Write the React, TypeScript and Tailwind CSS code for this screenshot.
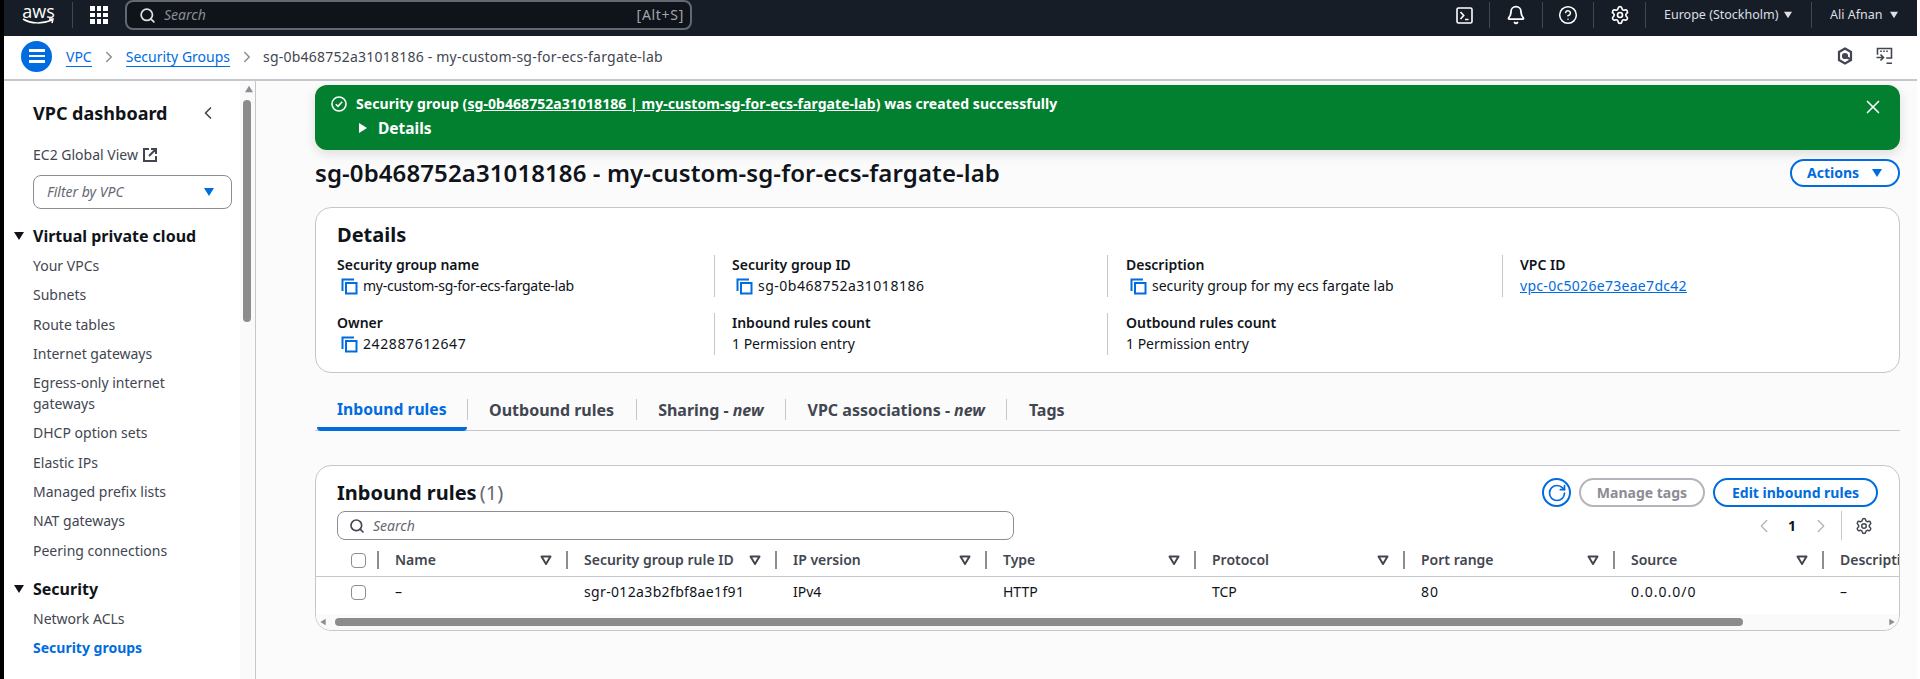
import { Bell, ChevronLeft, ChevronRight, CircleHelp, RotateCw, Search, Settings, X } from "lucide-react";

const FONT = "font-['Noto_Sans',sans-serif]";

const VPC_LINKS = [
  "Your VPCs",
  "Subnets",
  "Route tables",
  "Internet gateways",
  "Egress-only internet gateways",
  "DHCP option sets",
  "Elastic IPs",
  "Managed prefix lists",
  "NAT gateways",
  "Peering connections",
];

const COLUMNS = [
  { label: "Name", value: "–", tracking: "" },
  { label: "Security group rule ID", value: "sgr-012a3b2fbf8ae1f91", tracking: "tracking-[0.35px]" },
  { label: "IP version", value: "IPv4", tracking: "" },
  { label: "Type", value: "HTTP", tracking: "" },
  { label: "Protocol", value: "TCP", tracking: "" },
  { label: "Port range", value: "80", tracking: "tracking-[1px]" },
  { label: "Source", value: "0.0.0.0/0", tracking: "tracking-[1px]" },
  { label: "Description", value: "–", tracking: "" },
];

const TABLE_GRID =
  "grid grid-cols-[61px_189px_209px_210px_209px_209px_210px_209px_200px]";

function Caret({ className = "" }: { className?: string }) {
  return (
    <svg viewBox="0 0 12 10" className={className} fill="currentColor">
      <path d="M1 1h10L6 9z" />
    </svg>
  );
}

function CopyIcon() {
  return (
    <svg viewBox="0 0 17 17" className="size-[17px] shrink-0 text-[#006ce0]" fill="none" stroke="currentColor" strokeWidth="2">
      <path d="M1.5 13V1.5H13" />
      <rect x="5" y="5" width="10.5" height="10.5" />
    </svg>
  );
}

function FilterIcon() {
  return (
    <svg viewBox="0 0 12 12" className="size-3 text-[#424650]" fill="none" stroke="currentColor" strokeWidth="2" strokeLinejoin="round">
      <path d="M1.5 2.5h9L6 10z" />
    </svg>
  );
}

function TopBar() {
  return (
    <header className="flex h-9 shrink-0 bg-[#161d26] text-white">
      <div className="flex h-[30px] items-center">
        <div className="ml-[18px] -mt-[2px] flex w-[33px] flex-col items-center">
          <span className="font-['Open_Sans',sans-serif] text-[18px] leading-[16px]">aws</span>
          <svg viewBox="0 0 33 7" className="-mt-px h-[7px] w-[33px]" fill="none" stroke="currentColor" strokeWidth="1.5">
            <path d="M1 1c8 5 20 5 29 1M27 1h4l-1 4" />
          </svg>
        </div>
        <div className="ml-[17px] h-[26px] w-px bg-[#424650]" />
        <div className="ml-[17px] grid w-[18px] grid-cols-3 gap-[2px]">
          {Array.from({ length: 9 }).map((_, i) => (
            <span key={i} className="size-[4.5px] bg-white" />
          ))}
        </div>
        <div className="ml-[17px] flex h-[30px] w-[567px] items-center rounded-lg border-2 border-[#656871] bg-[#0f141a] pl-3 pr-[6px]">
          <Search className="size-[17px] text-[#dedee3]" strokeWidth={2.5} />
          <span className="ml-[8px] text-sm italic text-[#8c8c94]">Search</span>
          <span className="ml-auto text-sm tracking-[0.7px] text-[#a4a4ad]">[Alt+S]</span>
        </div>
      </div>
      <div className="ml-auto flex h-[30px] items-center">
        <div className="flex w-[50px] justify-center">
          <svg viewBox="0 0 17 17" className="size-[17px]" fill="none" stroke="currentColor" strokeWidth="1.6">
            <rect x="1" y="1" width="15" height="15" rx="1.5" />
            <path d="M4.5 5l3.2 3.500-3.200 3.500M9 12.500h3.500" />
          </svg>
        </div>
        <div className="flex h-[26px] w-[53px] items-center justify-center border-l border-[#424650]">
          <Bell className="size-5" strokeWidth={2.2} />
        </div>
        <div className="flex h-[26px] w-[51px] items-center justify-center border-l border-[#424650]">
          <CircleHelp className="size-5" strokeWidth={1.8} />
        </div>
        <div className="flex h-[26px] w-[52px] items-center justify-center border-l border-[#424650]">
          <Settings className="size-5" strokeWidth={2} />
        </div>
        <div className="flex h-[26px] w-[166px] items-center border-l border-[#424650] pl-[18px] text-[12.5px] text-[#dedee3]">
          Europe (Stockholm)
          <Caret className="ml-[5px] h-2 w-2.5 text-[#dedee3]" />
        </div>
        <div className="flex h-[26px] w-[106px] items-center border-l border-[#424650] pl-[18px] text-[12.5px] text-[#dedee3]">
          Ali Afnan
          <Caret className="ml-[7px] h-2 w-2.5 text-[#dedee3]" />
        </div>
      </div>
    </header>
  );
}

function Breadcrumbs() {
  return (
    <div className="flex h-[45px] shrink-0 items-center border-b-2 border-[#c6c6cd] bg-white pb-[1px] text-sm">
      <div className="ml-[17px] -mt-[2px] flex size-[31px] flex-col items-center justify-center gap-[3px] rounded-full bg-[#006ce0]">
        <span className="h-[2.5px] w-4 bg-white" />
        <span className="h-[2.5px] w-4 bg-white" />
        <span className="h-[2.5px] w-4 bg-white" />
      </div>
      <a className="ml-[14px] border-b border-[#006ce0] leading-[19px] text-[#006ce0]">VPC</a>
      <ChevronRight className="mx-2 size-[18px] text-[#8c8c94]" strokeWidth={2} />
      <a className="border-b border-[#006ce0] leading-[19px] text-[#006ce0]">Security Groups</a>
      <ChevronRight className="mx-2 size-[18px] text-[#8c8c94]" strokeWidth={2} />
      <span className="-ml-px tracking-[0.22px] text-[#424650]">sg-0b468752a31018186 - my-custom-sg-for-ecs-fargate-lab</span>
      <div className="ml-auto -mt-[2px] flex items-center gap-[21px] pr-[24px] text-[#424650]">
        <svg viewBox="0 0 18 18" className="size-[18px]" fill="none" stroke="currentColor" strokeWidth="2.2">
          <path d="M9 1.500l6 3.500v8l-6 3.500L3 13V5z" />
          <circle cx="9" cy="9" r="2" fill="currentColor" />
          <path d="M10 10l4 2" />
        </svg>
        <svg viewBox="0 0 18 18" className="size-[18px]" fill="none" stroke="currentColor" strokeWidth="1.6">
          <path d="M2.500 7V1.500h14V11H12M6 4.200h.01M9 4.200h.01M12 4.200h.01" strokeLinecap="square" />
          <path d="M1.500 10.500H8M5.500 7.500l3 3-3 3M11.500 16.200h5.500" />
        </svg>
      </div>
    </div>
  );
}

function Sidebar() {
  return (
    <aside className="relative w-[252px] shrink-0 border-r border-[#c6c6cd] bg-white">
      <div className="absolute bottom-0 right-0 top-0 w-[15px] bg-[#fafafa]">
        <Caret className="absolute left-[4px] top-[4px] h-2 w-2.5 rotate-180 text-[#8c8c94]" />
        <div className="absolute left-[3px] top-[19px] h-[222px] w-2 rounded bg-[#8c8c8c]" />
      </div>
      <div className="flex items-center pl-[29px] pt-[19px]">
        <h2 className="text-lg font-bold leading-[26px] text-[#0f141a]">VPC dashboard</h2>
        <ChevronLeft className="ml-[31px] size-5 text-[#424650]" strokeWidth={2} />
      </div>
      <div className="mt-[19px] flex items-center pl-[29px] text-sm leading-5 text-[#424650]">
        EC2 Global View
        <svg viewBox="0 0 16 16" className="ml-1 size-4" fill="none" stroke="currentColor" strokeWidth="2">
          <path d="M7 2H2v12h12V9M9 2h5v5M14 2L7 9" />
        </svg>
      </div>
      <div className="ml-[29px] mt-[10px] flex h-[34px] w-[199px] items-center rounded-lg border border-[#8c8c94] pl-[13px] pr-[16px] text-sm italic text-[#656871]">
        Filter by VPC
        <Caret className="ml-auto h-2.5 w-3 text-[#006ce0]" />
      </div>
      <NavSection title="Virtual private cloud" links={VPC_LINKS} className="mt-[16px]" />
      <NavSection title="Security" links={["Network ACLs"]} active="Security groups" className="mt-[17px]" />
    </aside>
  );
}

function NavSection({ title, links, active, className = "" }: { title: string; links: string[]; active?: string; className?: string }) {
  return (
    <div className={className}>
      <div className="flex items-center pl-[9px] text-base font-bold leading-[22px] text-[#0f141a]">
        <Caret className="mr-[8px] h-3 w-3" />
        {title}
      </div>
      <ul className="pl-[29px] pt-[8px] text-sm leading-[21px] text-[#424650]">
        {links.map((link) => (
          <li key={link} className="mb-[8.3px] w-[170px]">{link}</li>
        ))}
        {active && <li className="font-bold text-[#006ce0]">{active}</li>}
      </ul>
    </div>
  );
}

function Field({ label, value, copy, link, tracking = "" }: { label: string; value: string; copy?: boolean; link?: boolean; tracking?: string }) {
  return (
    <div className="h-[42px]">
      <div className="text-sm font-semibold leading-[20px] text-[#0f141a]">{label}</div>
      <div className="flex items-center gap-[5px] pl-0 text-sm leading-[22px] text-[#0f141a]">
        {copy && <span className="ml-[4px]"><CopyIcon /></span>}
        {link ? <a className={`${tracking} text-[#006ce0] underline`}>{value}</a> : <span className={tracking}>{value}</span>}
      </div>
    </div>
  );
}

function DetailsCard() {
  return (
    <section className="mt-[19px] h-[166px] rounded-2xl border border-[#c6c6cd] bg-white pl-[21px] pt-[15px]">
      <h2 className="text-xl font-bold leading-[24px] text-[#0f141a]">Details</h2>
      <div className="mt-[8px] grid grid-cols-[377px_393px_395px_380px] gap-y-4">
        <Field label="Security group name" value="my-custom-sg-for-ecs-fargate-lab" copy tracking="tracking-[-0.27px]" />
        <div className="border-l border-[#c6c6cd] pl-[17px]">
          <Field label="Security group ID" value="sg-0b468752a31018186" copy tracking="tracking-[0.5px]" />
        </div>
        <div className="border-l border-[#c6c6cd] pl-[18px]">
          <Field label="Description" value="security group for my ecs fargate lab" copy />
        </div>
        <div className="border-l border-[#c6c6cd] pl-[17px]">
          <Field label="VPC ID" value="vpc-0c5026e73eae7dc42" link tracking="tracking-[0.3px]" />
        </div>
        <Field label="Owner" value="242887612647" copy tracking="tracking-[0.6px]" />
        <div className="border-l border-[#c6c6cd] pl-[17px]">
          <Field label="Inbound rules count" value="1 Permission entry" />
        </div>
        <div className="border-l border-[#c6c6cd] pl-[18px]">
          <Field label="Outbound rules count" value="1 Permission entry" />
        </div>
      </div>
    </section>
  );
}

function Tabs() {
  const tabs: [string, string?][] = [
    ["Inbound rules"],
    ["Outbound rules"],
    ["Sharing - ", "new"],
    ["VPC associations - ", "new"],
    ["Tags"],
  ];
  return (
    <div className="mt-[19px] flex h-[39px] border-b border-[#c6c6cd] text-base font-bold text-[#424650]">
      {tabs.map(([label, tag], i) => (
        <div
          key={label}
          className={
            i === 0
              ? "relative -mb-px ml-[2px] flex h-[39px] items-start rounded-b-sm border-b-4 border-[#006ce0] pb-1 pl-[20px] pr-[20px] pt-[6px] text-[15.7px] leading-[22px] text-[#006ce0]"
              : "mb-[8px] mt-[7px] flex h-[21px] items-center border-l border-[#c6c6cd] px-[21.5px] leading-[22px]"
          }
        >
          {label}
          {tag && <i className="ml-1">{tag}</i>}
        </div>
      ))}
    </div>
  );
}

function RulesCard() {
  return (
    <section className="mt-[34px] h-[166px] overflow-hidden rounded-2xl border border-[#c6c6cd] bg-white">
      <div className="flex h-[45px] items-start pl-[21px] pr-[21px] pt-[12px]">
        <h2 className="text-xl font-bold leading-[30px] text-[#0f141a]">
          Inbound rules <span className="-ml-[2px] font-normal text-[#656871]">(1)</span>
        </h2>
        <div className="ml-auto flex items-center gap-2">
          <div className="flex size-[29px] items-center justify-center rounded-full border-2 border-[#006ce0] text-[#006ce0]">
            <RotateCw className="size-[20px]" strokeWidth={2} />
          </div>
          <div className="flex h-[29px] w-[126px] items-center justify-center rounded-full border-2 border-[#b4b4bb] text-sm font-bold text-[#8c8c94]">
            Manage tags
          </div>
          <div className="flex h-[29px] w-[165px] items-center justify-center rounded-full border-2 border-[#006ce0] text-sm font-bold text-[#006ce0]">
            Edit inbound rules
          </div>
        </div>
      </div>
      <div className="flex h-[29px] items-center pl-[21px] pr-[26px]">
        <div className="flex h-[29px] w-[677px] items-center rounded-lg border border-[#8c8c94] pl-[11px] text-sm italic text-[#656871]">
          <Search className="mr-2 size-4 text-[#424650]" strokeWidth={2.5} />
          Search
        </div>
        <div className="ml-auto flex h-[29px] items-center text-[#0f141a]">
          <ChevronLeft className="size-[22px] text-[#b4b4bb]" strokeWidth={1.5} />
          <span className="ml-[13px] mr-[14px] text-sm font-bold">1</span>
          <ChevronRight className="size-[22px] text-[#b4b4bb]" strokeWidth={1.5} />
          <div className="ml-[9px] flex h-[29px] items-center border-l border-[#c6c6cd] pl-[13px] text-[#424650]">
            <Settings className="size-[18px]" strokeWidth={2} />
          </div>
        </div>
      </div>
      <div className={`${TABLE_GRID} mt-[7px] h-[30px] items-center border-b border-[#c6c6cd] pb-[3px]`}>
        <div className="pl-[35px]">
          <div className="size-[15px] rounded border border-[#8c8c94]" />
        </div>
        {COLUMNS.map((col, i) => (
          <div
            key={col.label}
            className="flex h-[18px] items-center overflow-hidden border-l-2 border-[#8c8c94] pl-[16px] pr-[14px] text-sm font-semibold leading-5 text-[#424650]"
          >
            <span className="whitespace-nowrap">{col.label}</span>
            {i < 7 && <span className="ml-auto"><FilterIcon /></span>}
          </div>
        ))}
      </div>
      <div className={`${TABLE_GRID} h-[37px] items-center pb-[7px] text-sm text-[#0f141a]`}>
        <div className="pl-[35px]">
          <div className="size-[15px] rounded border border-[#8c8c94]" />
        </div>
        {COLUMNS.map((col) => (
          <div key={col.label} className={`pl-[18px] ${col.tracking}`}>{col.value}</div>
        ))}
      </div>
      <div className="flex h-[16px] items-center bg-[#fafafa]">
        <Caret className="ml-[3px] h-2 w-2 rotate-90 text-[#8c8c8c]" />
        <div className="ml-[8px] h-2 w-[1408px] rounded bg-[#8c8c8c]" />
        <Caret className="ml-auto mr-[3px] h-2 w-2 -rotate-90 text-[#8c8c8c]" />
      </div>
    </section>
  );
}

function Flash() {
  return (
    <div className="mt-1 flex h-[65px] rounded-xl bg-[#037f30] pl-[16px] pr-[16px] pt-[9px] text-sm font-bold text-white shadow-[0_4px_12px_rgba(0,0,0,0.12)]">
      <svg viewBox="0 0 16 16" className="mt-[2px] size-4" fill="none" stroke="currentColor" strokeWidth="1.6">
        <circle cx="8" cy="8" r="7" />
        <path d="M4.800 8.200l2.200 2.200 4.200-4.600" />
      </svg>
      <div className="ml-[9px]">
        <div className="leading-5 tracking-[0.06px]">
          Security group (<a className="underline">sg-0b468752a31018186 | my-custom-sg-for-ecs-fargate-lab</a>) was created successfully
        </div>
        <div className="mt-[4px] flex items-center pl-[2px] text-[15.5px] font-bold leading-5">
          <svg viewBox="0 0 10 12" className="mr-[10px] h-3 w-2.5" fill="currentColor">
            <path d="M1 1l8 5-8 5z" />
          </svg>
          Details
        </div>
      </div>
      <X className="ml-auto mt-[2px] size-[22px]" strokeWidth={1.8} />
    </div>
  );
}

export default function App() {
  return (
    <div className={`${FONT} flex h-[679px] w-[1920px] overflow-hidden bg-white`}>
      <div className="w-1 shrink-0 bg-black" />
      <div className="flex w-[1913px] shrink-0 flex-col">
        <TopBar />
        <Breadcrumbs />
        <div className="flex min-h-0 flex-1">
          <Sidebar />
          <main className="min-w-0 flex-1 bg-[#fbfbfb] pl-[59px] pr-[17px]">
            <Flash />
            <div className="mt-[8px] flex h-[30px] items-center">
              <h1 className="text-2xl font-semibold leading-[30px] tracking-[0.1px] text-[#0f141a]">
                sg-0b468752a31018186 - my-custom-sg-for-ecs-fargate-lab
              </h1>
              <button className="ml-auto flex h-[28px] w-[110px] items-center justify-center gap-[12px] rounded-full border-2 border-[#006ce0] bg-white text-sm font-bold text-[#006ce0]">
                Actions
                <Caret className="h-2.5 w-3" />
              </button>
            </div>
            <DetailsCard />
            <Tabs />
            <RulesCard />
          </main>
        </div>
      </div>
    </div>
  );
}
